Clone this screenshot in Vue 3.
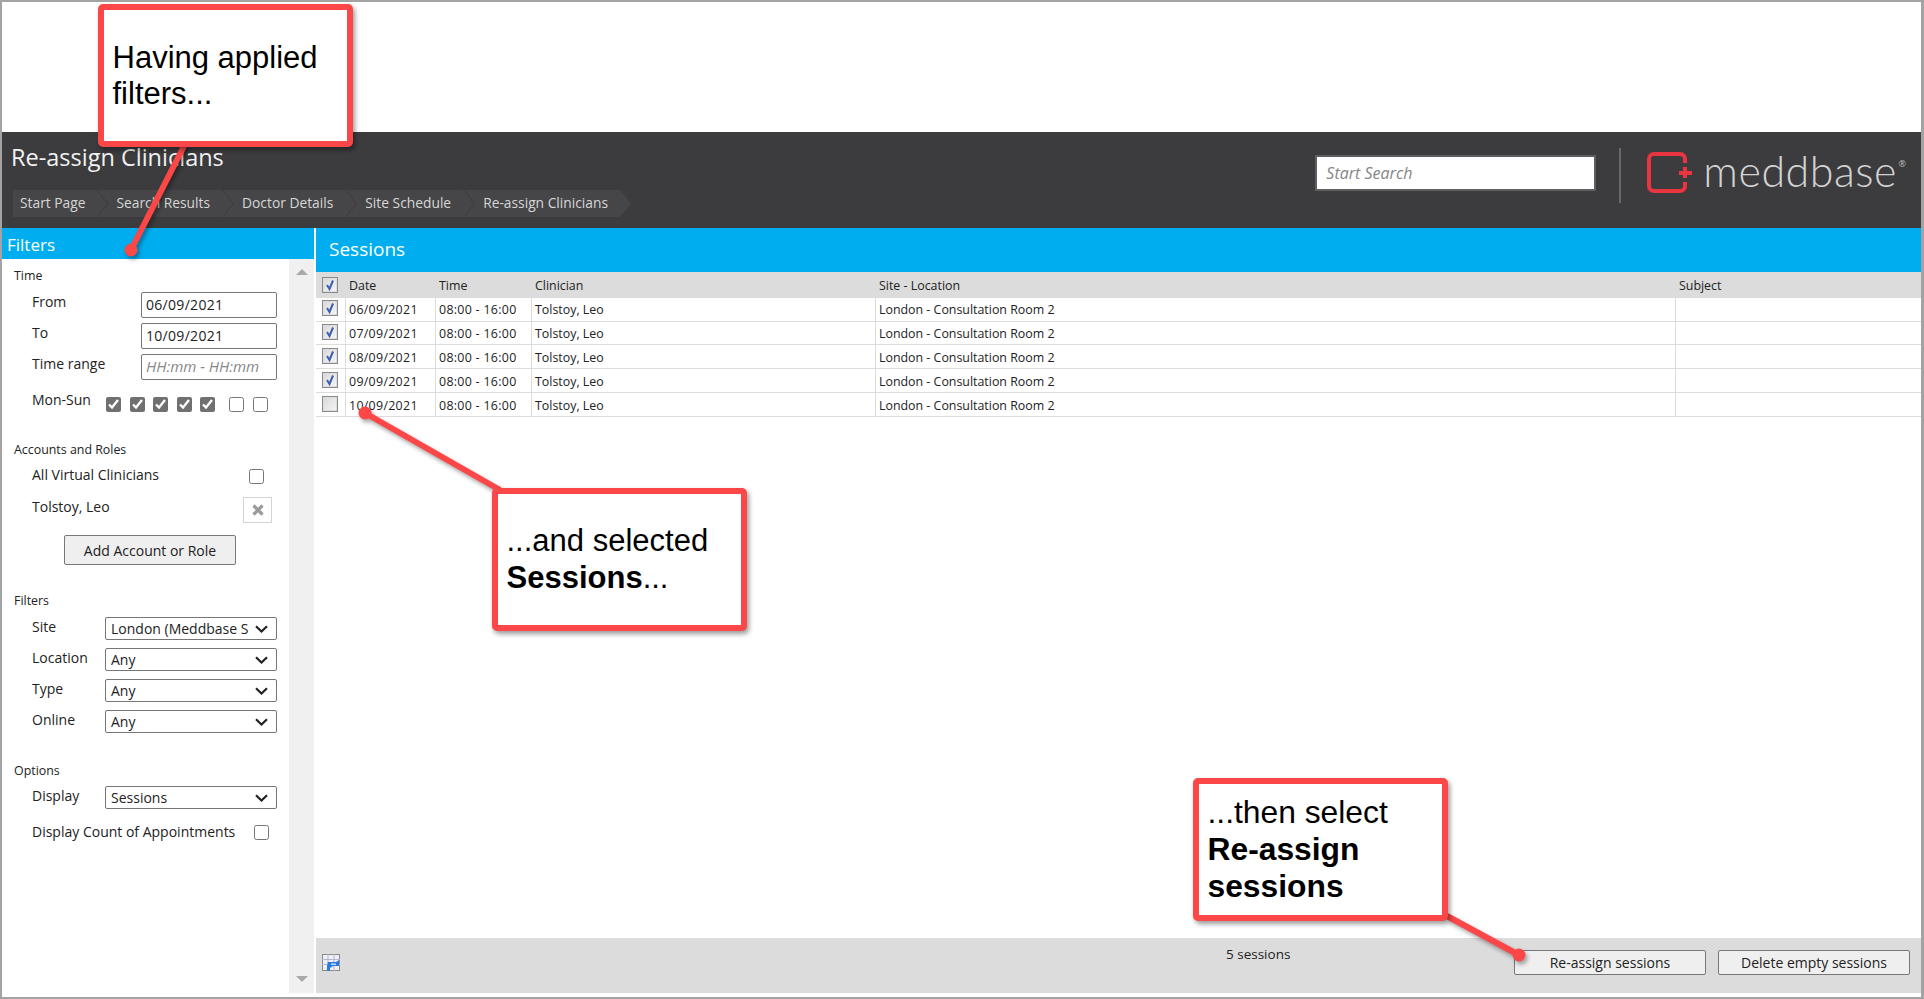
<script setup>
// Re-assign clinicians screen with the three help callouts on top
const crumbs = ['Start Page', 'Search Results', 'Doctor Details', 'Site Schedule', 'Re-assign Clinicians']
const days = [true, true, true, true, true, false, false]
const selects = [
  { label: 'Site', value: 'London (Meddbase Services)' },
  { label: 'Location', value: 'Any' },
  { label: 'Type', value: 'Any' },
  { label: 'Online', value: 'Any' }
]
const sessions = [
  { date: '06/09/2021', picked: true },
  { date: '07/09/2021', picked: true },
  { date: '08/09/2021', picked: true },
  { date: '09/09/2021', picked: true },
  { date: '10/09/2021', picked: false }
]
</script>

<template>
  <div class="page">
    <div class="blank"></div>

    <header class="header">
      <div class="header-left">
        <h1 class="title">Re-assign Clinicians</h1>
        <nav class="crumbs">
          <span v-for="c in crumbs" :key="c" class="crumb">{{ c }}</span>
        </nav>
      </div>
      <div class="header-right">
        <input class="search" type="text" placeholder="Start Search" />
        <div class="divider"></div>
        <div class="logo">
          <svg class="logo-mark" width="46" height="42" viewBox="0 0 46 42">
            <path d="M38 11V7a5 5 0 0 0-5-5H7a5 5 0 0 0-5 5v27a5 5 0 0 0 5 5h26a5 5 0 0 0 5-5v-4" fill="none" stroke="#e8353f" stroke-width="4" />
            <path d="M38 15v11M32 21h13" fill="none" stroke="#e8353f" stroke-width="4" />
          </svg>
          <span class="logo-text">meddbase</span>
          <span class="logo-reg">®</span>
        </div>
      </div>
    </header>

    <div class="content">
      <aside class="filters">
        <div class="filters-title">Filters</div>
        <div class="filters-body">
          <form class="form">
            <div class="group-label first">Time</div>
            <div class="time-rows">
              <label class="row"><span>From</span><input class="field" value="06/09/2021" /></label>
              <label class="row"><span>To</span><input class="field" value="10/09/2021" /></label>
              <label class="row"><span>Time range</span><input class="field" placeholder="HH:mm - HH:mm" /></label>
            </div>
            <div class="row days-row">
              <span class="days-label">Mon-Sun</span>
              <div class="days">
                <input v-for="(d, i) in days" :key="i" class="check" type="checkbox" :checked="d" />
              </div>
            </div>

            <div class="group-label accounts">Accounts and Roles</div>
            <div class="row virtual-row">
              <span>All Virtual Clinicians</span>
              <input class="check" type="checkbox" />
            </div>
            <div class="row person-row">
              <span>Tolstoy, Leo</span>
              <button type="button" class="remove">
                <svg width="12" height="12" viewBox="0 0 12 12"><path d="M1.5 1.5l9 9M10.5 1.5l-9 9" stroke="#9a9a9a" stroke-width="3.2" /></svg>
              </button>
            </div>
            <button type="button" class="btn add-btn">Add Account or Role</button>

            <div class="group-label filter-label">Filters</div>
            <div class="select-rows">
              <label v-for="s in selects" :key="s.label" class="row">
                <span>{{ s.label }}</span>
                <span class="select-wrap">
                  <select class="select"><option>{{ s.value }}</option></select>
                  <svg class="chevron" width="13" height="8" viewBox="0 0 13 8"><path d="M1 1.2l5.5 5.3L12 1.2" fill="none" stroke="#222" stroke-width="2.2" /></svg>
                </span>
              </label>
            </div>

            <div class="group-label options">Options</div>
            <label class="row display-row">
              <span>Display</span>
              <span class="select-wrap">
                <select class="select"><option>Sessions</option></select>
                <svg class="chevron" width="13" height="8" viewBox="0 0 13 8"><path d="M1 1.2l5.5 5.3L12 1.2" fill="none" stroke="#222" stroke-width="2.2" /></svg>
              </span>
            </label>
            <div class="row count-row">
              <span>Display Count of Appointments</span>
              <input class="check" type="checkbox" />
            </div>
          </form>
          <div class="track">
            <span class="arrow up"></span>
            <span class="arrow down"></span>
          </div>
        </div>
      </aside>

      <main class="main">
        <div class="main-title">Sessions</div>
        <table class="grid">
          <colgroup>
            <col style="width: 29px" />
            <col style="width: 90px" />
            <col style="width: 96px" />
            <col style="width: 344px" />
            <col style="width: 800px" />
            <col />
          </colgroup>
          <thead>
            <tr>
              <th>
                <span class="xp-check">
                  <svg width="14" height="14" viewBox="0 0 14 14"><path d="M4 7l2.5 4L10 2.5" fill="none" stroke="#3f5fb0" stroke-width="2" /></svg>
                </span>
              </th>
              <th>Date</th>
              <th>Time</th>
              <th>Clinician</th>
              <th>Site - Location</th>
              <th>Subject</th>
            </tr>
          </thead>
          <tbody>
            <tr v-for="s in sessions" :key="s.date">
              <td>
                <span class="xp-check">
                  <svg v-if="s.picked" width="14" height="14" viewBox="0 0 14 14"><path d="M4 7l2.5 4L10 2.5" fill="none" stroke="#3f5fb0" stroke-width="2" /></svg>
                </span>
              </td>
              <td class="num">{{ s.date }}</td>
              <td class="num">08:00 - 16:00</td>
              <td>Tolstoy, Leo</td>
              <td>London - Consultation Room 2</td>
              <td></td>
            </tr>
          </tbody>
        </table>
        <div class="spacer"></div>
        <footer class="footer">
          <svg class="grid-icon" width="19" height="18" viewBox="0 0 19 18">
            <rect x="0.5" y="0.5" width="17" height="16" fill="#eef0f8" stroke="#8a8a8a" />
            <path d="M0 5.5h18M0 10.5h18M6 0v17M12 0v17" stroke="#b4b8d0" />
            <path d="M6 8h8l3-2v6h-6l-3 2v3h-3v-5z" fill="#2a7be0" />
            <path d="M9 9.5h5v1.5h-5z" fill="#bcdcff" />
          </svg>
          <span class="count">5 sessions</span>
          <div class="footer-btns">
            <button type="button" class="btn foot-btn">Re-assign sessions</button>
            <button type="button" class="btn foot-btn">Delete empty sessions</button>
          </div>
        </footer>
      </main>
    </div>

    <!-- callout pointers -->
    <svg class="pointers" width="1924" height="999" viewBox="0 0 1924 999">
      <g fill="#fb4747" stroke="#fb4747" stroke-width="6">
        <path d="M185 144L131 250" />
        <circle cx="131" cy="250" r="3.5" />
        <path d="M500 490L365 413" />
        <circle cx="365" cy="413" r="3.5" />
        <path d="M1447 916L1519 955" />
        <circle cx="1519" cy="955" r="3.5" />
      </g>
    </svg>

    <div class="callout callout-filters">Having applied<br />filters...</div>
    <div class="callout callout-sessions">...and selected<br /><b>Sessions</b>...</div>
    <div class="callout callout-reassign">...then select<br /><b>Re-assign<br />sessions</b></div>
  </div>
</template>

<style>
html, body {
  margin: 0;
  background: #fff;
}
</style>

<style scoped>
.page {
  position: relative;
  box-sizing: border-box;
  width: 1924px;
  height: 999px;
  display: flex;
  flex-direction: column;
  overflow: hidden;
  background: #fff;
  border: 2px solid #a3a3a3;
  border-right-width: 3px;
  font-family: "Open Sans", "Noto Sans", sans-serif;
  font-size: 12px;
  color: #222;
}

.blank {
  height: 130px;
  flex: none;
}

/* header */
.header {
  flex: none;
  height: 96px;
  display: flex;
  justify-content: space-between;
  background: #3c3c3e;
}
.header-left {
  padding: 10px 0 0 9px;
}
.title {
  margin: 0;
  height: 30px;
  font-size: 23.5px;
  font-weight: 400;
  line-height: 30px;
  color: #f2f2f2;
}
.crumbs {
  display: flex;
  margin: 18px 0 0 2px;
}
.crumb {
  height: 27px;
  padding: 0 23px 0 19px;
  margin-left: -10px;
  background: #464648;
  color: #d6d6d6;
  font-size: 13.8px;
  line-height: 25px;
  clip-path: polygon(0 0, calc(100% - 11px) 0, 100% 50%, calc(100% - 11px) 100%, 0 100%, 11px 50%);
}
.crumb:first-child {
  margin-left: 0;
  padding: 0 22px 0 7px;
  clip-path: polygon(0 0, calc(100% - 11px) 0, 100% 50%, calc(100% - 11px) 100%, 0 100%);
}
.header-right {
  display: flex;
  align-items: flex-start;
}
.search {
  box-sizing: border-box;
  width: 281px;
  height: 36px;
  margin-top: 23px;
  padding: 0 9px;
  border: 2px solid #5f5f61;
  background: #fff;
  font-family: inherit;
  font-size: 16px;
  font-style: italic;
  outline: none;
}
.search::placeholder {
  color: #858585;
}
.divider {
  width: 2px;
  height: 55px;
  margin: 16px 26px 0 23px;
  background: #68686a;
}
.logo {
  display: flex;
  align-items: flex-start;
  margin-top: 20px;
  padding-right: 15px;
}
.logo-mark {
  display: block;
}
.logo-text {
  margin-left: 10px;
  font-family: "Lato", sans-serif;
  font-weight: 300;
  font-size: 43px;
  line-height: 38px;
  color: #d2d2d2;
  letter-spacing: 0.5px;
}
.logo-reg {
  margin-left: 1.5px;
  font-size: 9px;
  line-height: 24px;
  color: #bdbdbd;
}

/* left panel */
.content {
  flex: 1;
  display: flex;
  min-height: 0;
  padding-bottom: 4px;
}
.filters {
  flex: none;
  width: 312px;
  display: flex;
  flex-direction: column;
}
.filters-title {
  flex: none;
  height: 31px;
  padding-left: 5px;
  background: #00aeef;
  color: #fff;
  font-size: 17px;
  line-height: 33px;
}
.filters-body {
  flex: 1;
  display: flex;
  min-height: 0;
}
.form {
  flex: none;
  box-sizing: border-box;
  width: 287px;
  padding: 8px 0 0 12px;
  font-size: 14px;
  color: #222;
}
.group-label {
  height: 18px;
  font-size: 12.4px;
  line-height: 20px;
}
.group-label.first {
  line-height: 18px;
}
.row {
  display: flex;
  justify-content: space-between;
  padding: 0 12px 0 18px;
}
.row > span:first-child {
  line-height: 18px;
}
.time-rows {
  display: flex;
  flex-direction: column;
  gap: 5px;
  margin-top: 7px;
}
.time-rows .row span {
  margin-top: 1px;
}
.field {
  box-sizing: border-box;
  width: 136px;
  height: 26px;
  padding: 0 4px 1px;
  border: 1px solid #767676;
  border-radius: 2px;
  font-family: inherit;
  font-size: 14px;
  letter-spacing: 0.3px;
  color: #222;
  outline: none;
}
.field::placeholder {
  font-size: 15px;
  font-style: italic;
  letter-spacing: 0;
  color: #888;
}
.days-row {
  justify-content: flex-start;
  margin-top: 11px;
  height: 21px;
}
.days-label {
  width: 74px;
}
.days {
  display: flex;
  gap: 8.5px;
  padding-top: 6px;
}
.days .check:nth-child(6) {
  margin-left: 5.5px;
}
.check {
  flex: none;
  width: 15px;
  height: 15px;
  margin: 0;
  accent-color: #707070;
}
.accounts {
  margin-top: 28px;
}
.virtual-row {
  margin-top: 8px;
  padding-right: 25px;
}
.virtual-row .check {
  margin-top: 3px;
}
.person-row {
  margin-top: 13px;
  padding-right: 17px;
}
.person-row span {
  margin-top: 1px;
}
.remove {
  display: flex;
  align-items: center;
  justify-content: center;
  width: 29px;
  height: 26px;
  padding: 0;
  background: #fff;
  border: 1px solid #d4d4d4;
}
.btn {
  border: 1px solid #777;
  border-radius: 2px;
  background: #efefef;
  font-family: inherit;
  color: #222;
  padding: 0;
}
.add-btn {
  display: block;
  width: 172px;
  height: 30px;
  margin: 12px 0 0 50px;
  font-size: 14px;
}
.filter-label {
  margin-top: 26px;
}
.select-rows {
  display: flex;
  flex-direction: column;
  gap: 8px;
  margin-top: 8px;
}
.select-rows .row > span:first-child,
.display-row > span:first-child {
  line-height: 20px;
}
.select-wrap {
  position: relative;
  display: block;
  width: 172px;
  height: 23px;
}
.select {
  box-sizing: border-box;
  display: block;
  width: 100%;
  height: 100%;
  padding: 0 27px 0 5px;
  border: 1px solid #767676;
  border-radius: 2px;
  background: #fff;
  appearance: none;
  font-family: inherit;
  font-size: 14px;
  color: #222;
}
.chevron {
  position: absolute;
  right: 9px;
  top: 8px;
  pointer-events: none;
}
.options {
  margin-top: 28px;
}
.display-row {
  margin-top: 7px;
}
.count-row {
  margin-top: 14px;
  padding-right: 20px;
}
.count-row .check {
  margin-top: 2px;
}
.track {
  flex: 1;
  display: flex;
  flex-direction: column;
  justify-content: space-between;
  align-items: center;
  padding: 10px 0 11px;
  background: #f0f0f0;
}
.arrow {
  width: 0;
  height: 0;
  border-left: 6px solid transparent;
  border-right: 6px solid transparent;
}
.arrow.up {
  border-bottom: 6px solid #a9a9a9;
}
.arrow.down {
  border-top: 6px solid #a9a9a9;
}

/* sessions */
.main {
  flex: 1;
  min-width: 0;
  margin-left: 2px;
  display: flex;
  flex-direction: column;
}
.main-title {
  flex: none;
  height: 44px;
  padding-left: 13px;
  background: #00aeef;
  color: #fff;
  font-size: 19px;
  line-height: 42px;
}
.grid {
  flex: none;
  width: 100%;
  table-layout: fixed;
  border-collapse: separate;
  border-spacing: 0;
  font-size: 12.4px;
  color: #222;
}
.grid th {
  height: 26px;
  padding: 0 0 0 4px;
  background: #dcdcdc;
  font-weight: 400;
  text-align: left;
}
.grid td {
  box-sizing: border-box;
  height: 24px;
  padding: 0 0 0 3px;
  border-bottom: 1px solid #dcdcdc;
  border-left: 1px solid #dcdcdc;
}
.grid tbody tr:nth-child(2) td {
  height: 23px;
}
.grid tbody tr:nth-child(n + 3) td {
  padding-top: 1px;
}
.grid td:first-child {
  border-left: none;
}
.grid th:first-child,
.grid td:first-child {
  padding-left: 6px;
}
.grid td.num {
  letter-spacing: 0.3px;
}
.xp-check {
  box-sizing: border-box;
  display: block;
  width: 16px;
  height: 16px;
  border: 1px solid #8a8a8a;
  box-shadow: inset 0 0 0 1px #dedede;
  background: linear-gradient(135deg, #d8d8d8, #f6f6f6);
}
.xp-check svg {
  display: block;
}
.grid td .xp-check {
  margin-top: -3px;
}
.spacer {
  flex: 1;
}
.footer {
  flex: none;
  height: 55px;
  display: flex;
  align-items: flex-start;
  padding: 12px 11px 0 6px;
  box-sizing: border-box;
  background: #dcdcdc;
}
.grid-icon {
  margin-top: 4px;
}
.count {
  margin: -5px 0 0 885px;
  font-size: 13.5px;
  line-height: 18px;
}
.footer-btns {
  display: flex;
  gap: 12px;
  margin-left: auto;
}
.foot-btn {
  width: 192px;
  height: 25px;
  font-size: 14px;
}

/* callouts */
.pointers {
  position: absolute;
  left: -2px;
  top: -2px;
  pointer-events: none;
  filter: drop-shadow(2px 3px 2px rgba(0, 0, 0, 0.35));
}
.callout {
  position: absolute;
  box-sizing: border-box;
  width: 255px;
  height: 143px;
  padding: 0 0 0 8.5px;
  background: #fff;
  border: 6px solid #fb4747;
  border-radius: 5px;
  box-shadow: 2px 3px 5px rgba(0, 0, 0, 0.4);
  font-family: "Liberation Sans", Arial, sans-serif;
  font-size: 31px;
  line-height: 36.5px;
  color: #000;
}
.callout-filters {
  left: 96px;
  top: 2px;
  padding-top: 30px;
  line-height: 35.6px;
}
.callout-sessions {
  left: 490px;
  top: 486px;
  padding-top: 29px;
}
.callout-reassign {
  left: 1191px;
  top: 776px;
  padding-top: 10px;
  font-size: 31.8px;
  line-height: 36.8px;
}
</style>
